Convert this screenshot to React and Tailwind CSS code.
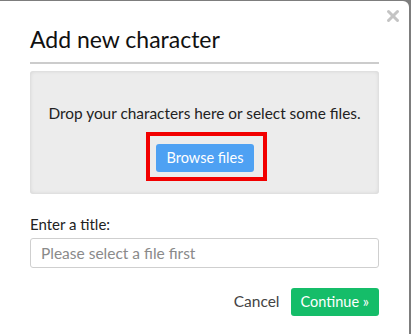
import { X } from 'lucide-react';

export default function App() {
  return (
    <div className="h-[334px] w-[411px] overflow-hidden bg-[#7d7d7d] pt-px pr-[2px] font-['Lato',sans-serif]">
      <div className="relative h-[340px] rounded-tr-[6px] bg-white px-[30px] pt-[23px]">
        {/* close */}
        <button className="absolute right-[7px] top-[6px] text-[#c4c4c4]" aria-label="Close">
          <X size={18} strokeWidth={4} />
        </button>

        <h2 className="border-b-2 border-[#cccccc] pb-[8px] text-[23px] leading-[30px] text-[#111]">
          Add new character
        </h2>

        {/* drop zone */}
        <div className="mt-[7px] flex h-[123px] flex-col items-center rounded-[3px] bg-[#ececec] pt-[32px] shadow-[inset_0_0_4px_rgba(0,0,0,0.12)]">
          <p className="text-[15.4px] leading-[20px] text-[#222]">
            Drop your characters here or select some files.
          </p>
          <div className="mt-[9px] ml-[4px] border-[4px] border-[#f20000] pl-[6px] pr-[9px] pt-[8px] pb-[5px]">
            <button className="h-[28px] rounded-[3px] bg-[#4ea1f3] px-[11px] text-[14.5px] text-white">
              Browse files
            </button>
          </div>
        </div>

        <label className="mt-[20px] block text-[15px] leading-[20px] text-[#222]">Enter a title:</label>
        <input
          className="mt-[4px] block h-[30px] w-full rounded-[3px] border border-[#cfcfcf] px-[10px] text-[15.5px] placeholder:text-[#8a8a8a] outline-none"
          placeholder="Please select a file first"
        />

        <div className="mt-[20px] flex items-center justify-end gap-[11px]">
          <button className="text-[15.5px] text-[#444]">Cancel</button>
          <button className="h-[28px] rounded-[3px] bg-[#15bd69] px-[10px] text-[14.5px] text-white">
            Continue »
          </button>
        </div>
      </div>
    </div>
  );
}
